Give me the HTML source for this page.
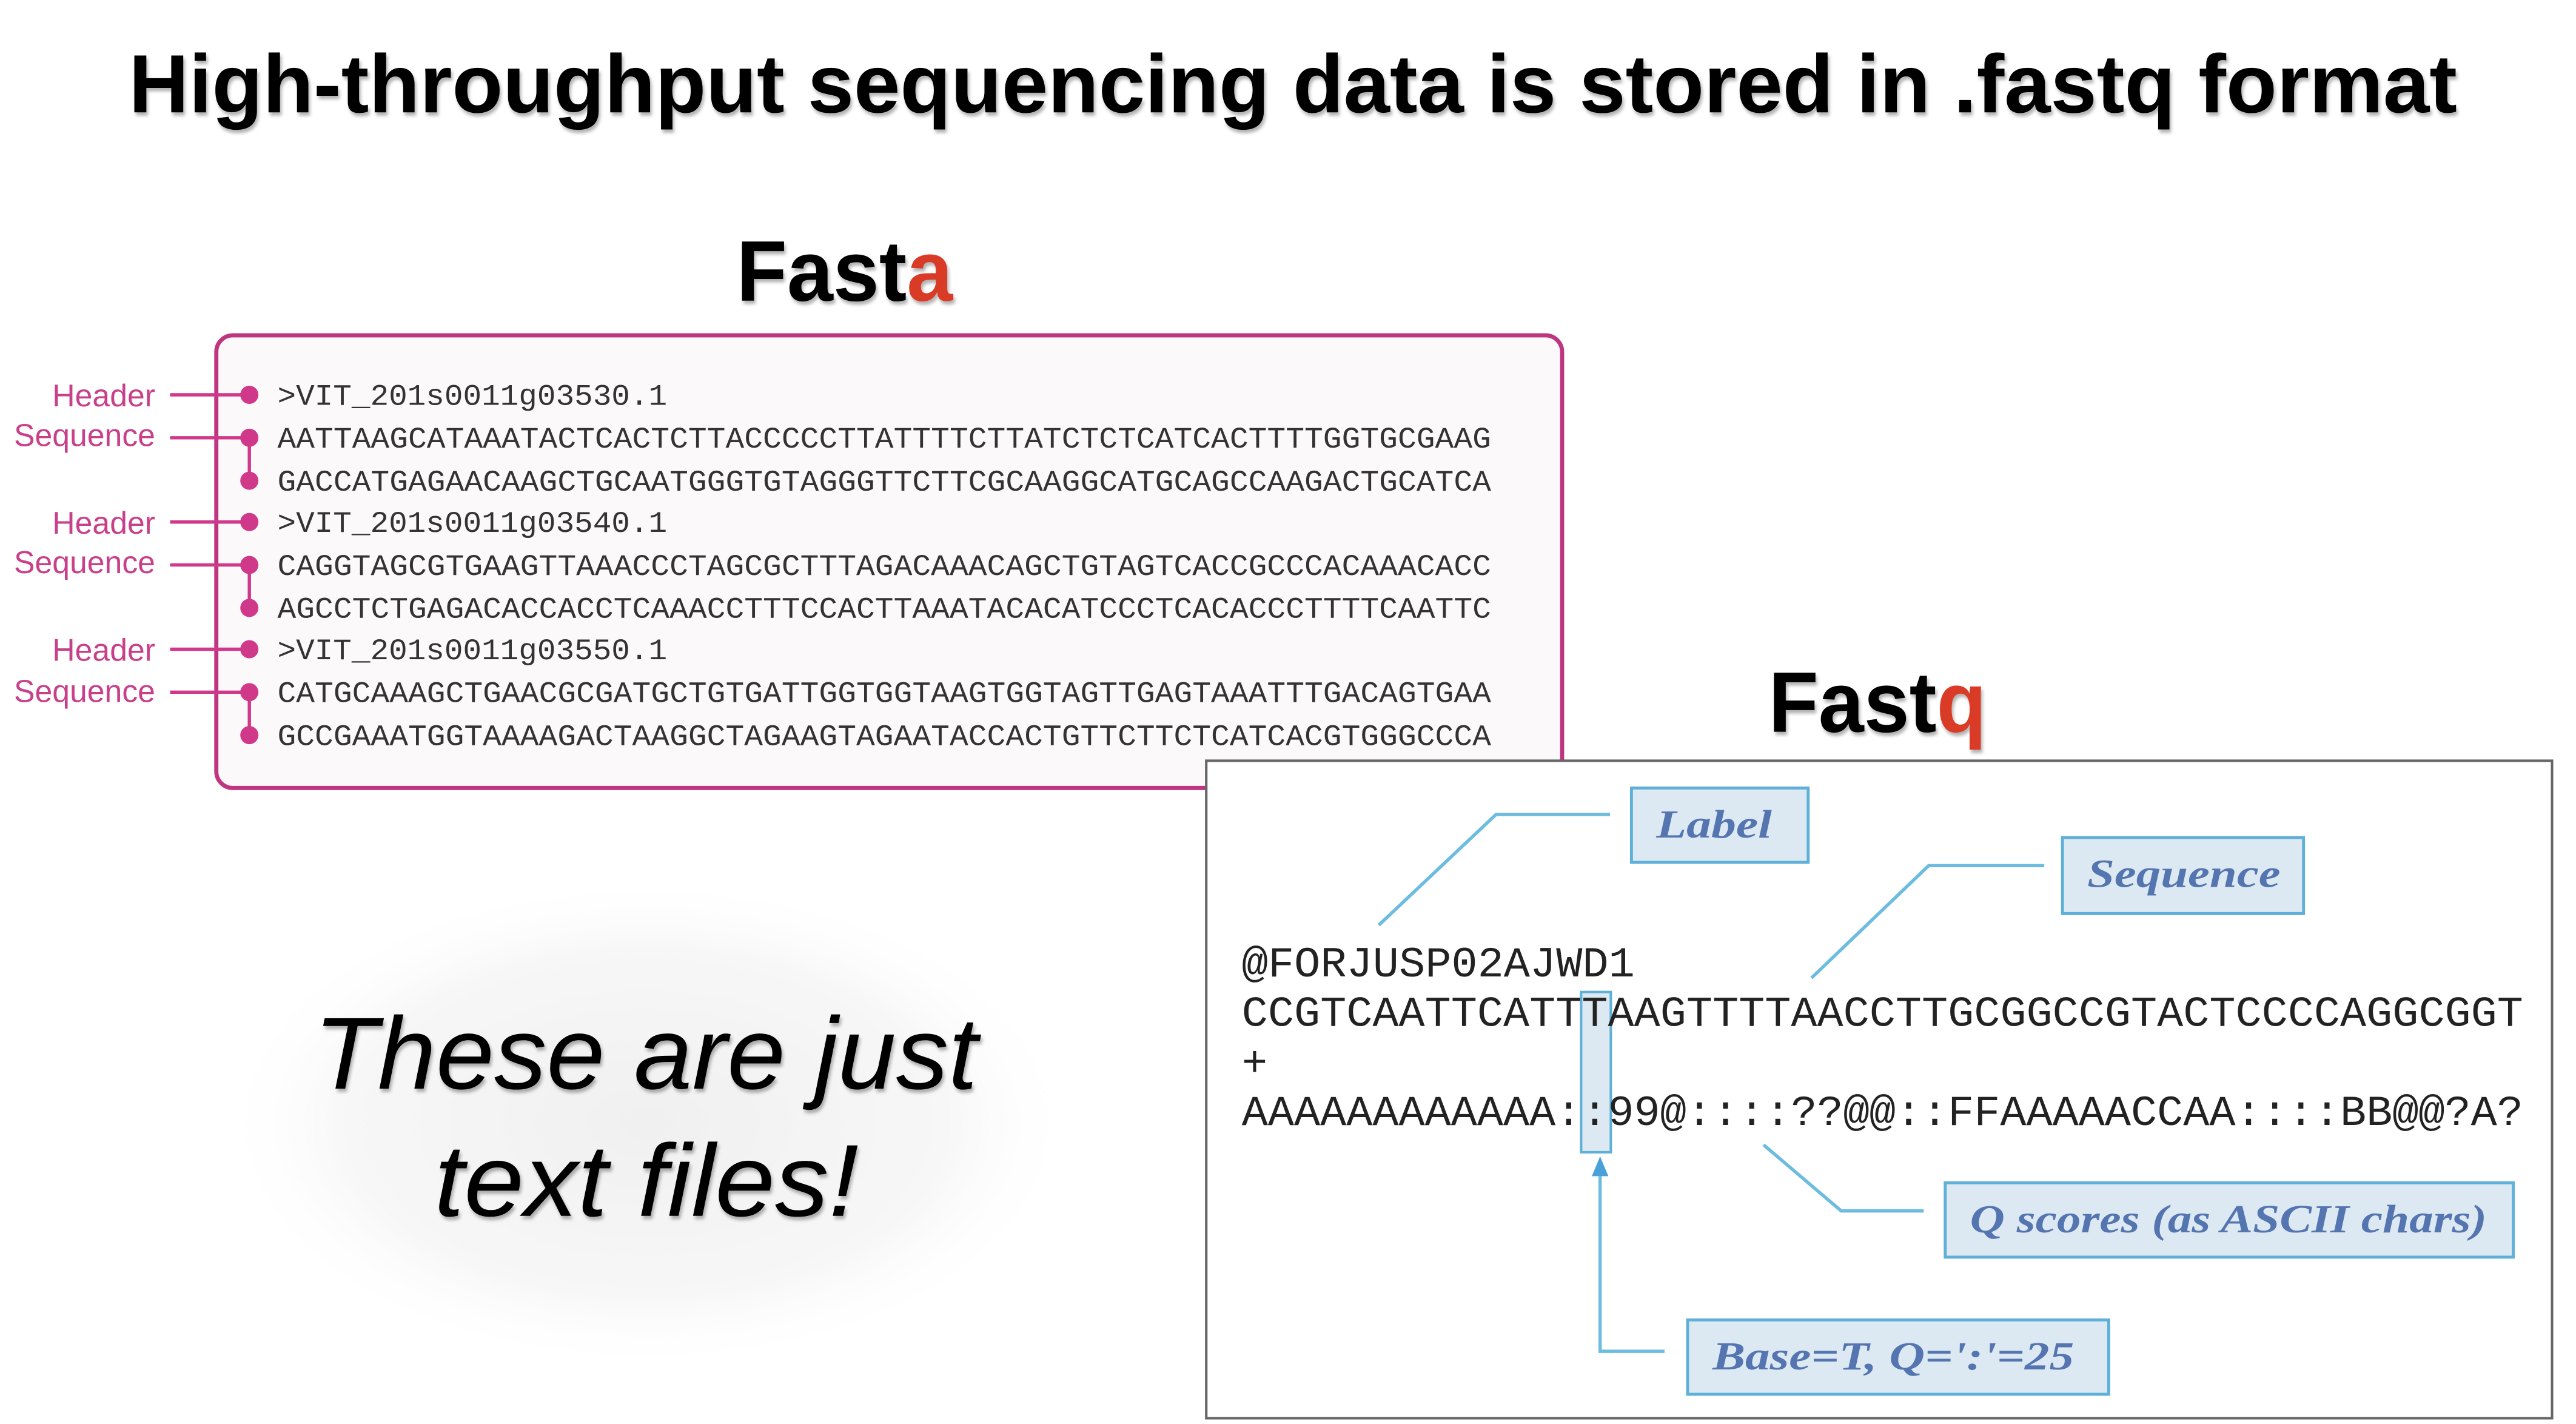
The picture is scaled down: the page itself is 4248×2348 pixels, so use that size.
<!DOCTYPE html>
<html><head><meta charset="utf-8"><style>
html,body{margin:0;padding:0;background:#fff;width:4248px;height:2348px;overflow:hidden}
svg{display:block}
.m{font-family:"Liberation Mono",monospace;fill:#333}
.q{font-family:"Liberation Mono",monospace;fill:#222}
.lb{font-family:"Liberation Sans",sans-serif;fill:#c8408a;font-size:19px}
.bx{font-family:"Liberation Serif",serif;font-style:italic;font-weight:bold;fill:#5575b0;font-size:24px}
</style></head><body>
<svg width="4248" height="2348" viewBox="0 0 1560 862" preserveAspectRatio="none" xmlns="http://www.w3.org/2000/svg">
<defs>
<filter id="sh" x="-5%" y="-20%" width="110%" height="140%"><feDropShadow dx="1" dy="2" stdDeviation="1" flood-color="#000" flood-opacity="0.3"/></filter>
<radialGradient id="glow" cx="50%" cy="50%" r="50%"><stop offset="0" stop-color="#f0f0f0"/><stop offset="0.7" stop-color="#f7f7f7"/><stop offset="1" stop-color="#fff" stop-opacity="0"/></radialGradient>
</defs>
<text x="783" y="68" text-anchor="middle" font-family="Liberation Sans,sans-serif" font-weight="bold" font-size="50" textLength="1410" lengthAdjust="spacingAndGlyphs" filter="url(#sh)">High-throughput sequencing data is stored in .fastq format</text>
<text x="446" y="182" font-family="Liberation Sans,sans-serif" font-weight="bold" font-size="52" textLength="131" lengthAdjust="spacingAndGlyphs" filter="url(#sh)">Fast<tspan fill="#d93a25">a</tspan></text>
<rect x="131" y="203" width="815" height="274" rx="10" fill="#fcf9fb" stroke="#c0357f" stroke-width="2.5"/>
<g stroke="#d0398a" stroke-width="2" fill="#d0398a">
<line x1="103" y1="239" x2="151" y2="239"/><line x1="103" y1="265" x2="151" y2="265"/><line x1="151" y1="265" x2="151" y2="291"/>
<line x1="103" y1="316" x2="151" y2="316"/><line x1="103" y1="342" x2="151" y2="342"/><line x1="151" y1="342" x2="151" y2="368"/>
<line x1="103" y1="393" x2="151" y2="393"/><line x1="103" y1="419" x2="151" y2="419"/><line x1="151" y1="419" x2="151" y2="445"/>
<g stroke="none"><circle cx="151" cy="239" r="5.5"/><circle cx="151" cy="265" r="5.5"/><circle cx="151" cy="291" r="5.5"/><circle cx="151" cy="316" r="5.5"/><circle cx="151" cy="342" r="5.5"/><circle cx="151" cy="368" r="5.5"/><circle cx="151" cy="393" r="5.5"/><circle cx="151" cy="419" r="5.5"/><circle cx="151" cy="445" r="5.5"/></g>
</g>
<g class="lb" text-anchor="end">
<text x="94" y="246">Header</text><text x="94" y="270">Sequence</text>
<text x="94" y="323">Header</text><text x="94" y="347">Sequence</text>
<text x="94" y="400">Header</text><text x="94" y="425">Sequence</text>
</g>
<g class="m" font-size="18">
<text x="168" y="245" textLength="236" lengthAdjust="spacingAndGlyphs">&gt;VIT_201s0011g03530.1</text>
<text x="168" y="271" textLength="735" lengthAdjust="spacingAndGlyphs">AATTAAGCATAAATACTCACTCTTACCCCCTTATTTTCTTATCTCTCATCACTTTTGGTGCGAAG</text>
<text x="168" y="297" textLength="735" lengthAdjust="spacingAndGlyphs">GACCATGAGAACAAGCTGCAATGGGTGTAGGGTTCTTCGCAAGGCATGCAGCCAAGACTGCATCA</text>
<text x="168" y="322" textLength="236" lengthAdjust="spacingAndGlyphs">&gt;VIT_201s0011g03540.1</text>
<text x="168" y="348" textLength="735" lengthAdjust="spacingAndGlyphs">CAGGTAGCGTGAAGTTAAACCCTAGCGCTTTAGACAAACAGCTGTAGTCACCGCCCACAAACACC</text>
<text x="168" y="374" textLength="735" lengthAdjust="spacingAndGlyphs">AGCCTCTGAGACACCACCTCAAACCTTTCCACTTAAATACACATCCCTCACACCCTTTTCAATTC</text>
<text x="168" y="399" textLength="236" lengthAdjust="spacingAndGlyphs">&gt;VIT_201s0011g03550.1</text>
<text x="168" y="425" textLength="735" lengthAdjust="spacingAndGlyphs">CATGCAAAGCTGAACGCGATGCTGTGATTGGTGGTAAGTGGTAGTTGAGTAAATTTGACAGTGAA</text>
<text x="168" y="451" textLength="735" lengthAdjust="spacingAndGlyphs">GCCGAAATGGTAAAAGACTAAGGCTAGAAGTAGAATACCACTGTTCTTCTCATCACGTGGGCCCA</text>
</g>
<ellipse cx="392" cy="680" rx="260" ry="150" fill="url(#glow)"/>
<g font-family="Liberation Sans,sans-serif" font-style="italic" font-size="62" filter="url(#sh)">
<text x="190" y="659" textLength="402" lengthAdjust="spacingAndGlyphs">These are just</text>
<text x="263" y="736" textLength="257" lengthAdjust="spacingAndGlyphs">text files!</text>
</g>
<text x="1071" y="443" font-family="Liberation Sans,sans-serif" font-weight="bold" font-size="52" textLength="132" lengthAdjust="spacingAndGlyphs" filter="url(#sh)">Fast<tspan fill="#d93a25">q</tspan></text>
<rect x="730.5" y="460.5" width="815" height="398" fill="#fff" stroke="#666" stroke-width="1.5"/>
<g stroke="#6cbce0" stroke-width="2" fill="none">
<polyline points="975,493 906,493 835,560"/>
<polyline points="1238,524 1168,524 1097,592"/>
<polyline points="1068,693 1115,733 1165,733"/>
<polyline points="969,712 969,818 1008,818"/>
</g>
<polygon points="969,700 964,712 974,712" fill="#4aa0d8"/>
<rect x="957.5" y="600.5" width="18" height="97" fill="#dde9f2" stroke="#5fb0d8" stroke-width="1.5"/>
<g class="q" font-size="26">
<text x="752" y="591" textLength="238" lengthAdjust="spacingAndGlyphs">@FORJUSP02AJWD1</text>
<text x="752" y="621" textLength="776" lengthAdjust="spacingAndGlyphs">CCGTCAATTCATTTAAGTTTTAACCTTGCGGCCGTACTCCCCAGGCGGT</text>
<text x="752" y="651">+</text>
<text x="752" y="681" textLength="776" lengthAdjust="spacingAndGlyphs">AAAAAAAAAAAA::99@::::??@@::FFAAAAACCAA::::BB@@?A?</text>
</g>
<g fill="#dde9f2" stroke="#5fb0d8" stroke-width="1.8">
<rect x="988" y="477" width="107" height="45"/>
<rect x="1249" y="507" width="146" height="46"/>
<rect x="1178" y="716" width="344" height="45"/>
<rect x="1022" y="799" width="255" height="45"/>
</g>
<g class="bx">
<text x="1003" y="507" textLength="70" lengthAdjust="spacingAndGlyphs">Label</text>
<text x="1264" y="537" textLength="117" lengthAdjust="spacingAndGlyphs">Sequence</text>
<text x="1193" y="746" textLength="313" lengthAdjust="spacingAndGlyphs">Q scores (as ASCII chars)</text>
<text x="1037" y="829" textLength="219" lengthAdjust="spacingAndGlyphs">Base=T, Q=':'=25</text>
</g>
</svg>
</body></html>
